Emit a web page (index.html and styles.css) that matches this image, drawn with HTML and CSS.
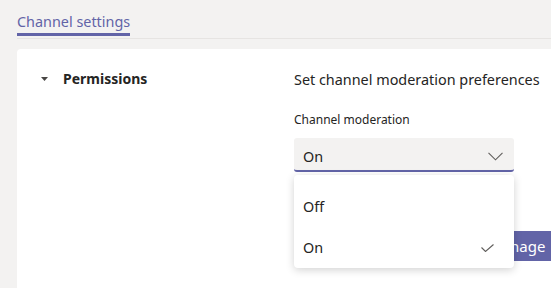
FILE: index.html
```html
<!DOCTYPE html>
<html lang="en">
<head>
  <meta charset="UTF-8" />
  <title>Channel settings</title>
  <link rel="stylesheet" href="styles.css">
</head>
<body>

  <div class="page">
    <div class="tabs">
      <span class="tab active">Channel settings</span>
    </div>

    <div class="card">
      <div class="section-head">
        <svg class="caret" width="7" height="4" viewBox="0 0 7 4"><path d="M0 0h7L3.5 4z" fill="#484644"/></svg>
        <span class="section-title">Permissions</span>
      </div>

      <div class="section-body">
        <p class="desc">Set channel moderation preferences</p>
        <div class="label">Channel moderation</div>

        <div class="dropdown-wrap">
          <div class="dropdown">
            <span>On</span>
            <svg width="15" height="9" viewBox="0 0 15 9"><path d="M0.5 0.8l7 7 7-7" fill="none" stroke="#605e5c" stroke-width="1.1"/></svg>
          </div>

          <div class="menu">
            <div class="menu-item">Off</div>
            <div class="menu-item">On
              <svg width="13" height="8" viewBox="0 0 13 8"><path d="M0.5 3.5l4 4 8-7" fill="none" stroke="#605e5c" stroke-width="1.1"/></svg>
            </div>
          </div>
        </div>

        <button class="btn">Manage</button>
      </div>
    </div>
  </div>

</body>
</html>
```

FILE: styles.css
```css
body {
  margin: 0;
  background-color: #f3f2f1;
  font-family: 'Segoe UI', 'Noto Sans', sans-serif;
  color: #252423;
  overflow: hidden;
}

.page {
  padding-left: 17px;
}

.tabs {
  height: 38px;
  border-bottom: 1px solid #e6e4e2;
  display: flex;
  align-items: flex-end;
}

.tab {
  font-size: 14.4px;
  color: #6264a7;
  padding-bottom: 1px;
  border-bottom: 3px solid #6264a7;
  line-height: 20px;
  margin-bottom: 2px;
}

.card {
  margin-top: 10px;
  background-color: #fff;
  border-radius: 4px 0 0 0;
  display: grid;
  grid-template-columns: 277px 1fr;
  height: 239px;
}

.section-head {
  display: flex;
  align-items: center;
  gap: 15px;
  padding: 20px 0 0 24px;
  height: 20px;
}

.section-title {
  font-weight: 700;
  font-size: 14px;
  line-height: 20px;
}

.section-body {
  padding-top: 21px;
}

.desc {
  margin: 0;
  font-size: 14.4px;
  line-height: 20px;
}

.label {
  margin-top: 22px;
  font-size: 12px;
  line-height: 16px;
}

.dropdown-wrap {
  position: relative;
  width: 220px;
  margin-top: 10px;
}

.dropdown {
  height: 34px;
  background-color: #f3f2f1;
  border-radius: 3px;
  border-bottom: 2px solid #6264a7;
  display: flex;
  align-items: center;
  justify-content: space-between;
  padding: 4px 11px 0 9px;
  box-sizing: border-box;
  font-size: 14.4px;
}

.menu {
  position: absolute;
  top: 37px;
  left: 0;
  right: 0;
  background-color: #fff;
  border-radius: 4px;
  box-shadow: 0 2px 8px rgba(0, 0, 0, 0.18);
  padding: 11px 0 0;
  z-index: 2;
}

.menu-item {
  height: 41px;
  display: flex;
  align-items: center;
  justify-content: space-between;
  padding: 0 20px 0 9px;
  font-size: 14.4px;
}

.btn {
  margin: 59px 0 0 174px;
  height: 30px;
  background-color: #6264a7;
  color: #fff;
  border: none;
  border-radius: 3px;
  font-family: inherit;
  font-size: 15px;
  padding: 0 20px;
}
```
